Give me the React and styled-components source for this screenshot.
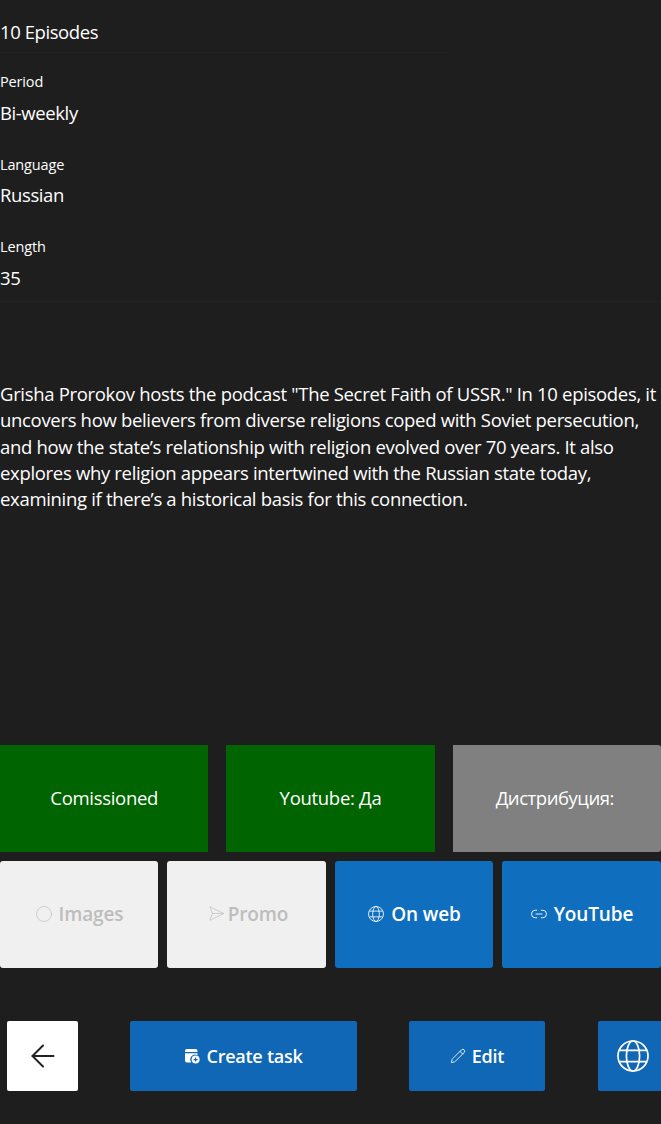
import React from "react";
import styled, { createGlobalStyle } from "styled-components";
import { ArrowLeft, Circle, Send, Link2, Pencil } from "lucide-react";

const Global = createGlobalStyle`
  html, body { margin: 0; padding: 0; background: #1e1e1e; }
  * { box-sizing: border-box; }
`;

const Page = styled.div`
  width: 661px;
  height: 1124px;
  overflow: hidden;
  display: flex;
  flex-direction: column;
  background: #1e1e1e;
  color: #fff;
  font-family: "Open Sans", "Noto Sans", sans-serif;
`;

const Info = styled.section`
  height: 302px;
  padding-top: 20px;
  border-bottom: 1px solid #222;
`;

const Heading = styled.div`
  height: 33px;
  width: 450px;
  font-size: 18.5px;
  line-height: 24px;
  letter-spacing: -0.42px;
  border-bottom: 1px solid #222;
`;

const Field = styled.div`
  height: 82.5px;
  padding-top: 19px;
`;

const Label = styled.div`
  font-size: 14.5px;
  line-height: 19px;
  letter-spacing: -0.15px;
`;

const Value = styled.div`
  margin-top: 9.75px;
  font-size: 18.5px;
  line-height: 24px;
  letter-spacing: -0.4px;
`;

const Description = styled.p`
  margin: 79px 0 0;
  height: 364px;
  font-size: 18.5px;
  line-height: 26.25px;
  letter-spacing: -0.32px;
  white-space: nowrap;
`;

const StatusRow = styled.div`
  display: grid;
  grid-template-columns: repeat(3, 1fr);
  gap: 18px;
  height: 107px;
`;

const Status = styled.div`
  display: flex;
  align-items: center;
  justify-content: center;
  padding-bottom: 2px;
  padding-right: ${(p) => (p.$rounded ? "4px" : "0")};
  font-size: 18.5px;
  letter-spacing: ${(p) => (p.$rounded ? "-0.45px" : "-0.3px")};
  background: ${(p) => p.$bg};
  border-radius: 0 ${(p) => (p.$rounded ? "3px 3px" : "0 0")} 0;
`;

const LinkRow = styled.div`
  display: grid;
  grid-template-columns: 158px 159px 158px 159px;
  gap: 9px;
  height: 107px;
  margin-top: 9px;
`;

const LinkButton = styled.div`
  display: flex;
  align-items: center;
  justify-content: center;
  gap: 6px;
  padding-bottom: 2px;
  font-size: 19px;
  font-weight: 600;
  letter-spacing: -0.12px;
  border-radius: 3px;
  background: ${(p) => (p.$off ? "#f0f0f0" : "#106ebe")};
  color: ${(p) => (p.$off ? "#bdbdbd" : "#fff")};
`;

const ActionBar = styled.div`
  display: flex;
  align-items: flex-start;
  gap: 52px;
  margin-top: 53px;
  padding-left: 7px;
  width: 720px;
`;

const BackButton = styled.div`
  width: 71px;
  height: 70px;
  flex: none;
  display: flex;
  align-items: center;
  justify-content: center;
  background: #fff;
  color: #222;
  border-radius: 2px;
`;

const ActionButton = styled.div`
  width: ${(p) => p.$w}px;
  margin-left: ${(p) => p.$shift || 0}px;
  height: 70px;
  flex: none;
  display: flex;
  align-items: center;
  justify-content: center;
  gap: 6px;
  font-size: 18px;
  font-weight: 600;
  letter-spacing: -0.25px;
  background: #1067b5;
  color: #fff;
  border-radius: 2px;
`;

const GlobeIcon = ({ size, stroke }) => (
  <svg width={size} height={size} viewBox="0 0 24 24" fill="none" stroke="currentColor" strokeWidth={stroke}>
    <circle cx="12" cy="12" r="10" />
    <ellipse cx="12" cy="12" rx="4.4" ry="10" />
    <path d="M3.2 8.2h17.6M3.2 15.8h17.6" />
  </svg>
);

const TaskIcon = () => (
  <svg width="16" height="16" viewBox="0 0 16 16">
    <path fill="currentColor" d="M3 1h8.5A2 2 0 0 1 13.5 3v1H1V3a2 2 0 0 1 2-2Z" />
    <path fill="currentColor" d="M1 5.2h12.5v2.1A4.8 4.8 0 0 0 7.4 14.5H3a2 2 0 0 1-2-2Z" />
    <circle cx="11.6" cy="11.6" r="4" fill="currentColor" />
    <path d="M11.6 9.6v4M9.6 11.6h4" stroke="#1067b5" strokeWidth="1.1" />
  </svg>
);

export default function App() {
  return (
    <Page>
      <Global />
      <Info>
        <Heading>10 Episodes</Heading>
        <Field>
          <Label>Period</Label>
          <Value>Bi-weekly</Value>
        </Field>
        <Field>
          <Label>Language</Label>
          <Value>Russian</Value>
        </Field>
        <Field>
          <Label>Length</Label>
          <Value>35</Value>
        </Field>
      </Info>
      <Description>
        Grisha Prorokov hosts the podcast "The Secret Faith of USSR." In 10 episodes, it
        <br />
        uncovers how believers from diverse religions coped with Soviet persecution,
        <br />
        and how the state’s relationship with religion evolved over 70 years. It also
        <br />
        explores why religion appears intertwined with the Russian state today,
        <br />
        examining if there’s a historical basis for this connection.
      </Description>
      <StatusRow>
        <Status $bg="#006400">Comissioned</Status>
        <Status $bg="#006400">Youtube: Да</Status>
        <Status $bg="#808080" $rounded>Дистрибуция:</Status>
      </StatusRow>
      <LinkRow>
        <LinkButton $off><Circle size={18} strokeWidth={0.9} />Images</LinkButton>
        <LinkButton $off><Send size={17} strokeWidth={0.9} style={{ transform: "rotate(45deg)" }} />Promo</LinkButton>
        <LinkButton><GlobeIcon size={18} stroke={1.1} />On web</LinkButton>
        <LinkButton><Link2 size={18} strokeWidth={1.2} />YouTube</LinkButton>
      </LinkRow>
      <ActionBar>
        <BackButton><ArrowLeft size={36} strokeWidth={1.3} /></BackButton>
        <ActionButton $w={227}><TaskIcon />Create task</ActionButton>
        <ActionButton $w={136}><Pencil size={16} strokeWidth={1.3} />Edit</ActionButton>
        <ActionButton $w={70} $shift={1}><GlobeIcon size={36} stroke={1.15} /></ActionButton>
      </ActionBar>
    </Page>
  );
}
